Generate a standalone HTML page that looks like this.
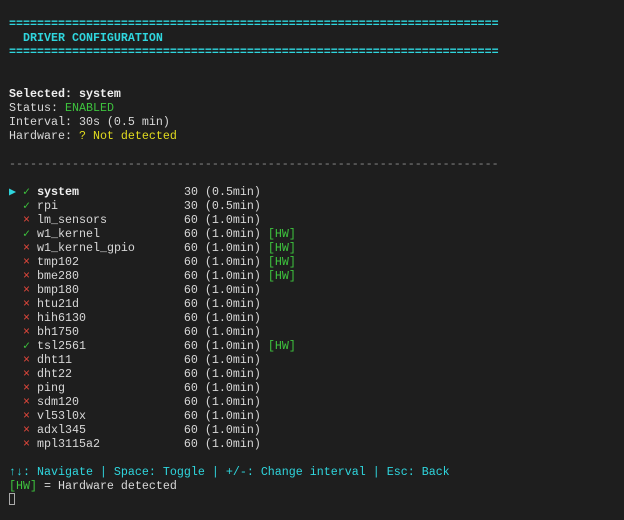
<!DOCTYPE html>
<html><head><meta charset="utf-8"><style>
html,body{margin:0;padding:0;background:#1e1e1e;}
body{width:624px;height:520px;overflow:hidden;}
pre{margin:0;padding:17px 0 0 9px;font-family:"Liberation Mono","DejaVu Sans Mono",monospace;font-size:11.67px;line-height:14px;color:#d8d8d8;white-space:pre;}
.b{font-weight:bold;color:#f0f0f0}
.c{color:#2fd6de}.g{color:#3ec43e}.r{color:#e5483c}.y{color:#e2dc1e}.d{color:#8a8a8a}
.hb{font-weight:bold;color:#2fd6de}
.cur{display:inline-block;width:6px;height:12px;border:1px solid #aaa;box-sizing:border-box;vertical-align:-2px}
</style></head><body><pre><span class="hb">======================================================================</span>
<span class="hb">  DRIVER CONFIGURATION</span>
<span class="hb">======================================================================</span>


<span class="b">Selected: system</span>
Status: <span class="g">ENABLED</span>
Interval: 30s (0.5 min)
Hardware: <span class="y">? Not detected</span>

<span class="d">----------------------------------------------------------------------</span>

<span class="c">▶</span> <span class="g">✓</span> <span class="b">system</span>               30 (0.5min)
  <span class="g">✓</span> rpi                  30 (0.5min)
  <span class="r">×</span> lm_sensors           60 (1.0min)
  <span class="g">✓</span> w1_kernel            60 (1.0min) <span class="g">[HW]</span>
  <span class="r">×</span> w1_kernel_gpio       60 (1.0min) <span class="g">[HW]</span>
  <span class="r">×</span> tmp102               60 (1.0min) <span class="g">[HW]</span>
  <span class="r">×</span> bme280               60 (1.0min) <span class="g">[HW]</span>
  <span class="r">×</span> bmp180               60 (1.0min)
  <span class="r">×</span> htu21d               60 (1.0min)
  <span class="r">×</span> hih6130              60 (1.0min)
  <span class="r">×</span> bh1750               60 (1.0min)
  <span class="g">✓</span> tsl2561              60 (1.0min) <span class="g">[HW]</span>
  <span class="r">×</span> dht11                60 (1.0min)
  <span class="r">×</span> dht22                60 (1.0min)
  <span class="r">×</span> ping                 60 (1.0min)
  <span class="r">×</span> sdm120               60 (1.0min)
  <span class="r">×</span> vl53l0x              60 (1.0min)
  <span class="r">×</span> adxl345              60 (1.0min)
  <span class="r">×</span> mpl3115a2            60 (1.0min)

<span class="c">↑↓: Navigate | Space: Toggle | +/-: Change interval | Esc: Back</span>
<span class="g">[HW]</span> = Hardware detected
<span class="cur"></span></pre></body></html>
